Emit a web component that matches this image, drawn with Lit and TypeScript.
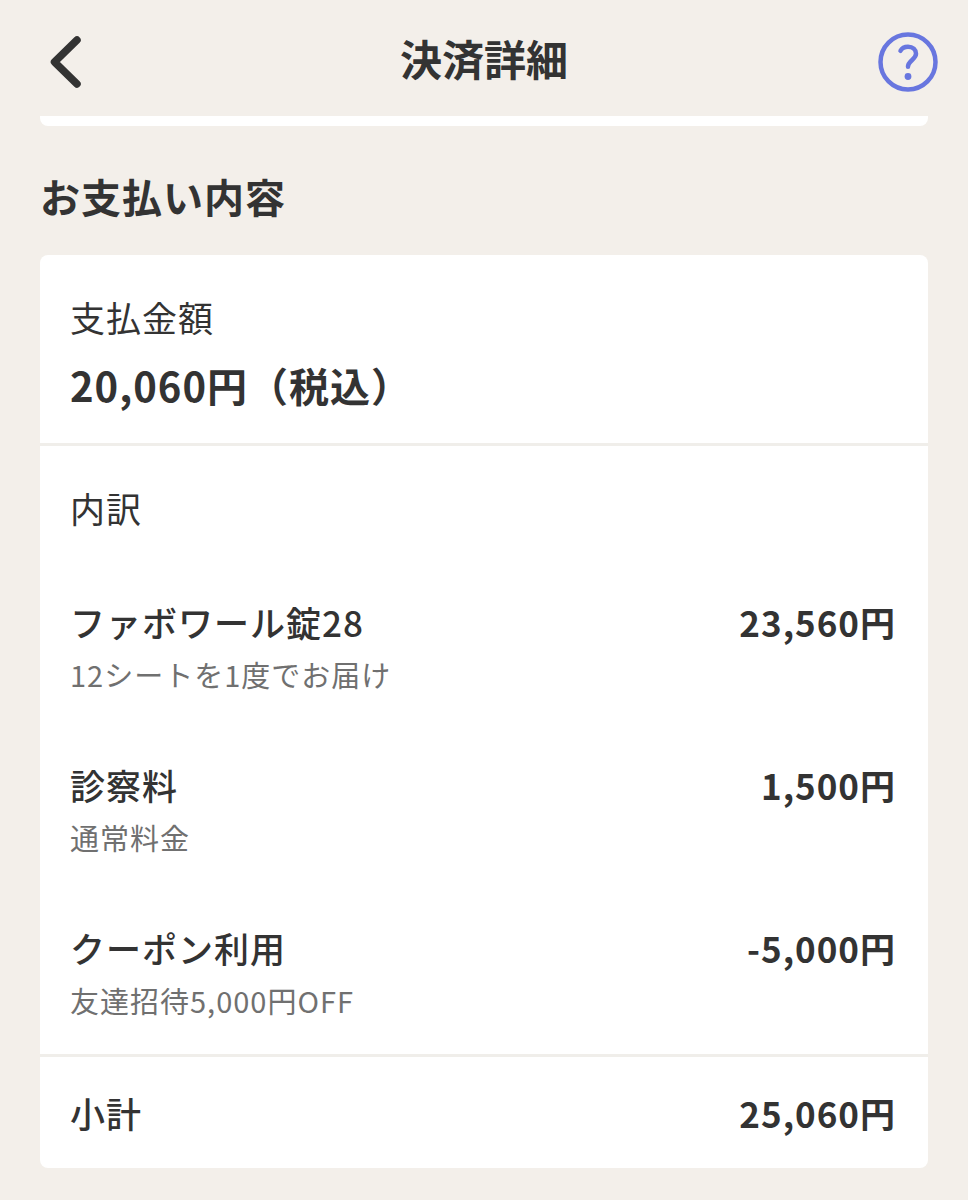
import { LitElement, html, css } from "lit";
import { customElement } from "lit/decorators.js";

interface Item {
  name: string;
  note: string;
  price: string;
}

const ITEMS: Item[] = [
  { name: "ファボワール錠28", note: "12シートを1度でお届け", price: "23,560円" },
  { name: "診察料", note: "通常料金", price: "1,500円" },
  { name: "クーポン利用", note: "友達招待5,000円OFF", price: "-5,000円" },
];

@customElement("app-root")
export class AppRoot extends LitElement {
  static styles = css`
    :host {
      display: block;
      min-height: 100vh;
      box-sizing: border-box;
      background: #f3efea;
      color: #333333;
      font-family: "Noto Sans CJK JP", sans-serif;
      padding-bottom: 32px;
    }
    h1, h2, h3, p { margin: 0; }
    header {
      display: grid;
      grid-template-columns: 60px 1fr 60px;
      align-items: center;
      height: 116px;
      padding: 0 30px;
      box-sizing: border-box;
    }
    button {
      width: 60px;
      height: 60px;
      padding: 0;
      border: 0;
      background: none;
      cursor: pointer;
      margin-top: 8px;
    }
    svg { display: block; }
    h1 {
      font-size: 42px;
      line-height: 60px;
      font-weight: 700;
      text-align: center;
    }
    main { padding: 0 40px; }
    .previous {
      height: 10px;
      border-radius: 0 0 8px 8px;
      background: #ffffff;
    }
    h2 {
      margin: 38px 0 27px;
      font-size: 40px;
      line-height: 64px;
      font-weight: 700;
      letter-spacing: 1px;
    }
    .card {
      border-radius: 8px;
      background: #ffffff;
    }
    .total, .details {
      padding: 36px 32px 28px 30px;
      border-bottom: 3px solid #f0eeea;
    }
    .details { padding-bottom: 30px; }
    .label {
      font-size: 35px;
      line-height: 52px;
      font-weight: 400;
      letter-spacing: 1px;
    }
    .amount {
      margin-top: 12px;
      font-size: 40px;
      line-height: 60px;
      font-weight: 700;
      letter-spacing: 1px;
    }
    .row {
      display: flex;
      justify-content: space-between;
      align-items: baseline;
      gap: 24px;
    }
    .item { margin-top: 60px; }
    .item + .item { margin-top: 59px; }
    .name, .price {
      font-size: 35px;
      line-height: 56px;
      letter-spacing: 1px;
    }
    .name { font-weight: 500; }
    .price { font-weight: 700; white-space: nowrap; }
    .note {
      font-size: 29px;
      line-height: 48px;
      letter-spacing: 1px;
      color: #707070;
    }
    .subtotal { padding: 28px 32px 27px 30px; }
  `;

  render() {
    return html`
      <header>
        <button type="button" aria-label="戻る">
          <svg width="60" height="60" viewBox="0 0 60 60" fill="none">
            <path d="M47 8L24.500 30L47 52" stroke="#333333" stroke-width="7.500" stroke-linecap="round" stroke-linejoin="round" />
          </svg>
        </button>
        <h1>決済詳細</h1>
        <button type="button" aria-label="ヘルプ">
          <svg width="60" height="60" viewBox="0 0 60 60" fill="none">
            <circle cx="30" cy="30" r="27.500" stroke="#6876df" stroke-width="4.500" />
            <path d="M22.500 18.800C24 16 26.500 14.800 30 14.800C34.800 14.800 38 17.700 38 21.800C38 27.500 30 28.500 30 34.800" stroke="#6876df" stroke-width="4.500" stroke-linecap="round" />
            <circle cx="30" cy="44.500" r="3.400" fill="#6876df" />
          </svg>
        </button>
      </header>
      <main>
        <div class="previous"></div>
        <h2>お支払い内容</h2>
        <div class="card">
          <section class="total">
            <h3 class="label">支払金額</h3>
            <p class="amount">20,060円（税込）</p>
          </section>
          <section class="details">
            <h3 class="label">内訳</h3>
            ${ITEMS.map(
              (item) => html`
                <div class="item">
                  <div class="row">
                    <span class="name">${item.name}</span>
                    <span class="price">${item.price}</span>
                  </div>
                  <p class="note">${item.note}</p>
                </div>
              `
            )}
          </section>
          <section class="subtotal row">
            <span class="name">小計</span>
            <span class="price">25,060円</span>
          </section>
        </div>
      </main>
    `;
  }
}
